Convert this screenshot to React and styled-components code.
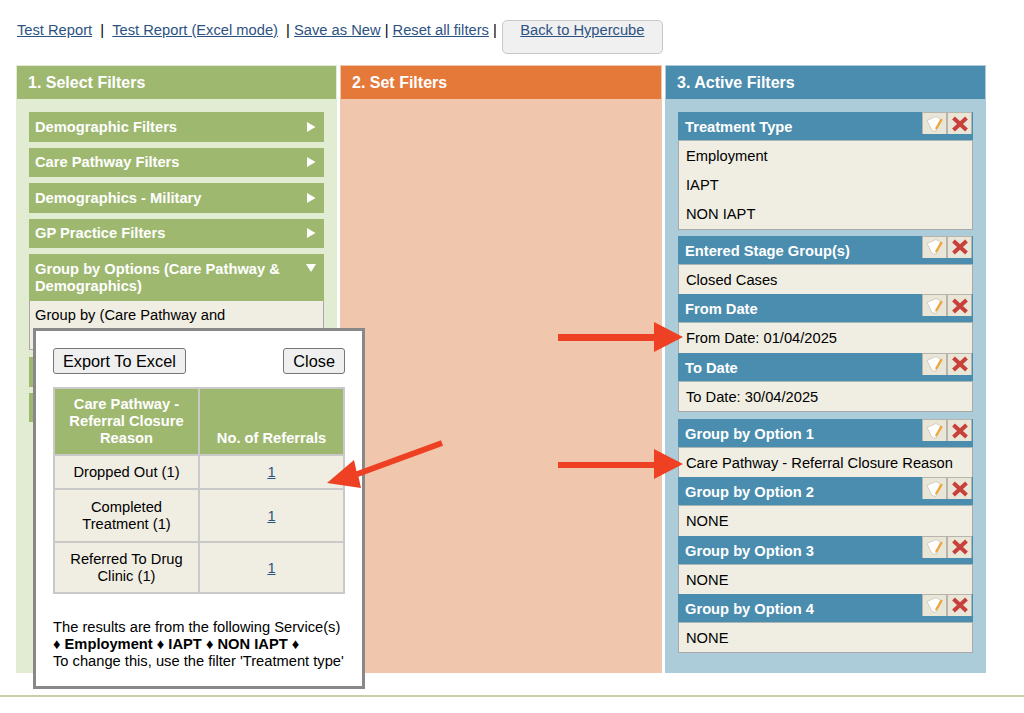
import React from 'react';
import styled, { createGlobalStyle } from 'styled-components';

const GlobalStyle = createGlobalStyle`
  html, body { margin: 0; padding: 0; background: #fff; }
  body { font-family: "Liberation Sans", Arial, sans-serif; font-size: 14.7px; color: #000; }
`;

const Page = styled.div`
  position: relative;
  width: 1024px;
  height: 713px;
  overflow: hidden;
`;

const TopBar = styled.div`
  display: flex;
  align-items: flex-start;
  height: 65px;
  padding: 21px 0 0 17px;
  box-sizing: border-box;
  line-height: 18px;
`;

const NavLink = styled.a`
  color: #2c5282;
  text-decoration: underline;
  cursor: pointer;
`;

const Sep = styled.span`
  white-space: pre;
`;

const BackButton = styled.div`
  width: 161px;
  height: 34px;
  margin: -1px 0 0 1px;
  box-sizing: border-box;
  text-align: center;
  background: #f0f0f0;
  border: 1px solid #c8c8c8;
  border-radius: 5px;
`;

const Columns = styled.div`
  display: flex;
  gap: 3px;
  margin-left: 16px;
  width: 970px;
  height: 608px;
`;

const Column = styled.section`
  width: ${p => p.$width}px;
  flex: none;
  background: ${p => p.$bg};
  box-sizing: border-box;
  border: 1px solid ${p => p.$bg};
`;

const ColumnHeader = styled.h2`
  margin: 0;
  height: 33px;
  padding-left: 11px;
  background: ${p => p.$color};
  color: #fff;
  font-size: 16px;
  font-weight: bold;
  line-height: 33px;
`;

const ColumnBody = styled.div`
  display: flex;
  flex-direction: column;
  padding: 13px 12px 0;
`;

const AccordionHead = styled.div`
  display: flex;
  justify-content: space-between;
  align-items: flex-start;
  box-sizing: border-box;
  min-height: 29.5px;
  margin-bottom: ${p => (p.$open ? 0 : 6)}px;
  padding: 6.5px 6px 5.4px 6px;
  background: #9eb870;
  color: #fff;
  font-weight: bold;
  line-height: 17.4px;
`;

const Caret = styled.svg`
  flex: none;
  width: 10px;
  height: 10px;
  margin: 3px 2px 0 12px;
  fill: #fff;
`;

const AccordionBody = styled.div`
  box-sizing: border-box;
  height: 49.5px;
  margin-bottom: 7px;
  padding: 6.5px 5px 0;
  background: #f0eee3;
  border: 1px solid #a9a9a9;
  border-top: 0;
  line-height: 17.4px;
`;

const FilterCard = styled.div`
  margin-bottom: ${p => p.$gap}px;
  background: #f0eee3;
  border: 1px solid #a9a9a9;
  border-top: 0;
`;

const FilterBlock = styled.div`
  position: relative;
`;

const FilterTitle = styled.div`
  box-sizing: border-box;
  height: 29.1px;
  margin: 0 -1px;
  padding: 0 7px;
  background: #4a8dae;
  border-bottom: 1px solid #a9b4b4;
  color: #fff;
  font-weight: bold;
  line-height: 30px;
`;

const FilterValue = styled.div`
  height: 28.2px;
  padding: 1px 0 0 7px;
  line-height: 29.2px;
  white-space: nowrap;
`;

const IconRow = styled.div`
  position: absolute;
  top: 0;
  right: 0;
  display: flex;
`;

const IconButton = styled.div`
  display: flex;
  align-items: center;
  justify-content: center;
  box-sizing: border-box;
  width: 25px;
  height: 22px;
  background: #e9e5d7;
  border: 1px solid #b5b5ad;
  border-width: 1px 1px 0 1px;
`;

const Modal = styled.div`
  position: absolute;
  left: 33px;
  top: 328px;
  width: 332px;
  height: 361px;
  box-sizing: border-box;
  padding: 17px 17px 0 17px;
  background: #fff;
  border: 3.5px solid #888;
`;

const ModalActions = styled.div`
  display: flex;
  justify-content: space-between;
  margin-bottom: 13px;
`;

const ModalButton = styled.button`
  height: 26px;
  padding: 0 9px;
  background: #efefef;
  border: 1px solid #767676;
  border-radius: 3px;
  color: #000;
  font-family: inherit;
  font-size: 16.3px;
`;

const ResultTable = styled.table`
  width: 292px;
  border-collapse: collapse;
  table-layout: fixed;
`;

const HeadCell = styled.th`
  padding: 7px 10px 6px;
  background: #9eb870;
  border: 2px solid #c9c9c9;
  color: #fff;
  font-size: 14.7px;
  line-height: 17.2px;
  text-align: center;
  vertical-align: bottom;
`;

const Cell = styled.td`
  height: ${p => p.$height}px;
  padding: 2px 6px 0;
  background: #f0eee3;
  border: 2px solid #c9c9c9;
  line-height: 17.2px;
  text-align: center;
`;

const Note = styled.div`
  margin-top: 25px;
  line-height: 17px;
  white-space: nowrap;
`;

const ArrowLayer = styled.svg`
  position: absolute;
  left: 0;
  top: 0;
  width: 1024px;
  height: 713px;
  pointer-events: none;
`;

const FooterLine = styled.div`
  position: absolute;
  left: 0;
  right: 0;
  top: 695px;
  height: 2px;
  background: #c6d1a8;
`;

const accordions = ['Demographic Filters', 'Care Pathway Filters', 'Demographics - Military', 'GP Practice Filters'];

const activeFilters = [
  { gap: 6.3, group: [{ title: 'Treatment Type', values: ['Employment', 'IAPT', 'NON IAPT'] }] },
  {
    gap: 7.3,
    group: [
      { title: 'Entered Stage Group(s)', values: ['Closed Cases'] },
      { title: 'From Date', values: ['From Date: 01/04/2025'] },
      { title: 'To Date', values: ['To Date: 30/04/2025'] },
    ],
  },
  {
    gap: 0,
    group: [
      { title: 'Group by Option 1', values: ['Care Pathway - Referral Closure Reason'] },
      { title: 'Group by Option 2', values: ['NONE'] },
      { title: 'Group by Option 3', values: ['NONE'] },
      { title: 'Group by Option 4', values: ['NONE'] },
    ],
  },
];

const rows = [
  { label: 'Dropped Out (1)', height: 30.5 },
  { label: 'Completed Treatment (1)', height: 48.5 },
  { label: 'Referred To Drug Clinic (1)', height: 47.5 },
];

const NoteIcon = () => (
  <svg width="20" height="18" viewBox="0 0 20 18">
    <path d="M2 5.5 L11 1.5 L15.5 4 L11 16.5 L7 15.5 Z" fill="#fff" stroke="#d3d0c2" strokeWidth="1" />
    <path d="M10.5 12.5 L15.8 3.5 L17.8 4.7 L12.5 13.7 L10.2 14.8 Z" fill="#eda63c" />
  </svg>
);

const CrossIcon = () => (
  <svg width="18" height="18" viewBox="0 0 18 18">
    <path d="M2.5 3 L15.5 15 M15.5 3 L2.5 15" stroke="#c8403a" strokeWidth="4" />
  </svg>
);

const CaretRight = () => (
  <Caret viewBox="0 0 10 10"><path d="M1 0 L9.5 5 L1 10 Z" /></Caret>
);

const CaretDown = () => (
  <Caret viewBox="0 0 10 10"><path d="M0 0 L10 0 L5 8 Z" /></Caret>
);

const App = () => {
  return (
    <Page>
      <GlobalStyle />
      <TopBar>
        <NavLink>Test Report</NavLink>
        <Sep>  |  </Sep>
        <NavLink>Test Report (Excel mode)</NavLink>
        <Sep>  | </Sep>
        <NavLink>Save as New</NavLink>
        <Sep> | </Sep>
        <NavLink>Reset all filters</NavLink>
        <Sep> | </Sep>
        <BackButton><NavLink>Back to Hypercube</NavLink></BackButton>
      </TopBar>

      <Columns>
        <Column $width={321} $bg="#e2ecd2">
          <ColumnHeader $color="#9eb870">1. Select Filters</ColumnHeader>
          <ColumnBody>
            {accordions.map(name => (
              <AccordionHead key={name}>{name}<CaretRight /></AccordionHead>
            ))}
            <AccordionHead $open>
              Group by Options (Care Pathway & Demographics)
              <CaretDown />
            </AccordionHead>
            <AccordionBody>Group by (Care Pathway and</AccordionBody>
            <AccordionHead />
            <AccordionHead />
          </ColumnBody>
        </Column>

        <Column $width={322} $bg="#f0c6ac">
          <ColumnHeader $color="#e5793a">2. Set Filters</ColumnHeader>
        </Column>

        <Column $width={321} $bg="#acccda">
          <ColumnHeader $color="#4a8dae">3. Active Filters</ColumnHeader>
          <ColumnBody>
            {activeFilters.map(({ group, gap }) => (
              <FilterCard key={group[0].title} $gap={gap}>
                {group.map(f => (
                  <FilterBlock key={f.title}>
                    <FilterTitle>{f.title}</FilterTitle>
                    <IconRow>
                      <IconButton><NoteIcon /></IconButton>
                      <IconButton><CrossIcon /></IconButton>
                    </IconRow>
                    {f.values.map(v => <FilterValue key={v}>{v}</FilterValue>)}
                  </FilterBlock>
                ))}
              </FilterCard>
            ))}
          </ColumnBody>
        </Column>
      </Columns>

      <Modal>
        <ModalActions>
          <ModalButton>Export To Excel</ModalButton>
          <ModalButton>Close</ModalButton>
        </ModalActions>
        <ResultTable>
          <thead>
            <tr>
              <HeadCell>Care Pathway - Referral Closure Reason</HeadCell>
              <HeadCell>No. of Referrals</HeadCell>
            </tr>
          </thead>
          <tbody>
            {rows.map(r => (
              <tr key={r.label}>
                <Cell $height={r.height}>{r.label}</Cell>
                <Cell $height={r.height}><NavLink>1</NavLink></Cell>
              </tr>
            ))}
          </tbody>
        </ResultTable>
        <Note>
          The results are from the following Service(s)<br />
          <b>♦ Employment ♦ IAPT ♦ NON IAPT ♦</b><br />
          To change this, use the filter 'Treatment type'
        </Note>
      </Modal>

      <FooterLine />

      <ArrowLayer viewBox="0 0 1024 713">
        <g fill="#ee4023">
          <rect x="558" y="334" width="100" height="7" />
          <path d="M654 322 L683 337 L654 352 Z" />
          <rect x="558" y="462" width="100" height="6" />
          <path d="M654 449 L683 464 L654 479 Z" />
          <path d="M441 440.2 L443 445.8 L358.5 476.8 L361 488 L327 483 L354 460 L356.5 471.2 Z" />
        </g>
      </ArrowLayer>
    </Page>
  );
};

export default App;
